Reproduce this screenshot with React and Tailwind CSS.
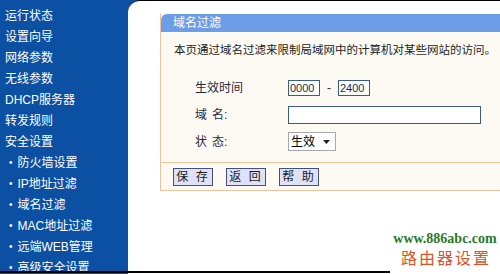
const menu = [
  { label: "运行状态" },
  { label: "设置向导" },
  { label: "网络参数" },
  { label: "无线参数" },
  { label: "DHCP服务器" },
  { label: "转发规则" },
  { label: "安全设置" },
  { label: "防火墙设置", sub: true },
  { label: "IP地址过滤", sub: true },
  { label: "域名过滤", sub: true },
  { label: "MAC地址过滤", sub: true },
  { label: "远端WEB管理", sub: true },
  { label: "高级安全设置", sub: true },
];

const font = { fontFamily: '"Liberation Sans", "Noto Sans CJK SC", sans-serif' };

export default function App() {
  return (
    <div
      className="w-[500px] h-[274px] overflow-hidden bg-[#0c50a3] flex relative text-[12px]"
      style={font}
    >
      {/* 左侧菜单 */}
      <div className="w-[128px] shrink-0 pt-[5px] text-white">
        {menu.map((m) => (
          <div key={m.label} className="h-[21px] leading-[18px] flex items-center">
            {m.sub ? (
              <span className="pl-[9px] flex items-center">
                <span className="text-[10px] mr-[5px]">•</span>
                {m.label}
              </span>
            ) : (
              <span className="pl-[5px]">{m.label}</span>
            )}
          </div>
        ))}
      </div>

      {/* 主区域 */}
      <div className="flex-1 bg-white rounded-tl-[12px] border-t border-black pl-[32px] pt-[13px] relative">
        <div className="border-r-2 border-black h-[224px] absolute right-0 top-0 z-10" />
        <div className="w-[360px] border-l border-b border-[#efc49c] bg-[#fdfaf4]">
          <div className="h-[18px] bg-[#6e9de7] rounded-tl-[6px] text-white pl-[12px] leading-[18px]">
            域名过滤
          </div>
          <div className="pl-[13px] pt-[11px] h-[25px] leading-[14px] text-[#1c1c1c] whitespace-nowrap text-[11.5px]">
            本页通过域名过滤来限制局域网中的计算机对某些网站的访问。
          </div>
          <div className="pl-[34px] pt-[23px] text-[#1e2a44]">
            <div className="flex items-center h-[16px]">
              <span className="w-[93px]">生效时间</span>
              <span className="w-[32px] h-[16px] border border-[#3b5a8f] bg-white text-[11px] leading-[14px] pl-[1px]">0000</span>
              <span className="w-[18px] text-center">-</span>
              <span className="w-[32px] h-[16px] border border-[#3b5a8f] bg-white text-[11px] leading-[14px] pl-[1px]">2400</span>
            </div>
            <div className="flex items-center h-[18px] mt-[10px]">
              <span className="w-[93px]">
                域<span className="inline-block w-[5px]" />名:
              </span>
              <span className="w-[193px] h-[18px] border border-[#3b5a8f] bg-white" />
            </div>
            <div className="flex items-center h-[19px] mt-[8px]">
              <span className="w-[93px]">
                状<span className="inline-block w-[5px]" />态:
              </span>
              <span className="w-[48px] h-[19px] border border-[#a9a9a9] bg-white flex items-center pl-[2px] text-black">
                生效
                <svg width="7" height="4" viewBox="0 0 7 4" className="ml-[8px]">
                  <path d="M0 0h7L3.5 4z" fill="#222" />
                </svg>
              </span>
            </div>
          </div>
          <div className="mt-[11px] border-t border-[#efc49c] h-[28px] flex items-center gap-[13px] pl-[12px]">
            {["保 存", "返 回", "帮 助"].map((b) => (
              <button
                key={b}
                className="w-[40px] h-[18px] bg-[#dfe1f6] border border-[#44507a] text-[#1b1b1b] text-[12px] leading-[16px] tracking-[2px]"
              >
                {b}
              </button>
            ))}
          </div>
        </div>
      </div>

      {/* 底部黑线 */}
      <div className="absolute left-0 bottom-[1px] w-[390px] h-[2px] bg-black" />

      {/* 水印 */}
      <div className="absolute right-0 bottom-0 w-[110px] h-[50px] bg-white flex flex-col items-center pt-[6px]">
        <span
          className="text-[#2d7a1f] font-bold text-[14px] leading-[17px]"
          style={{ fontFamily: '"Liberation Serif", serif' }}
        >
          www.886abc.com
        </span>
        <span
          className="text-[#e0502a] text-[16px] leading-[20px] tracking-[2px] ml-[2px]"
          style={{ fontFamily: '"Noto Sans CJK SC", sans-serif' }}
        >
          路由器设置
        </span>
      </div>
    </div>
  );
}
